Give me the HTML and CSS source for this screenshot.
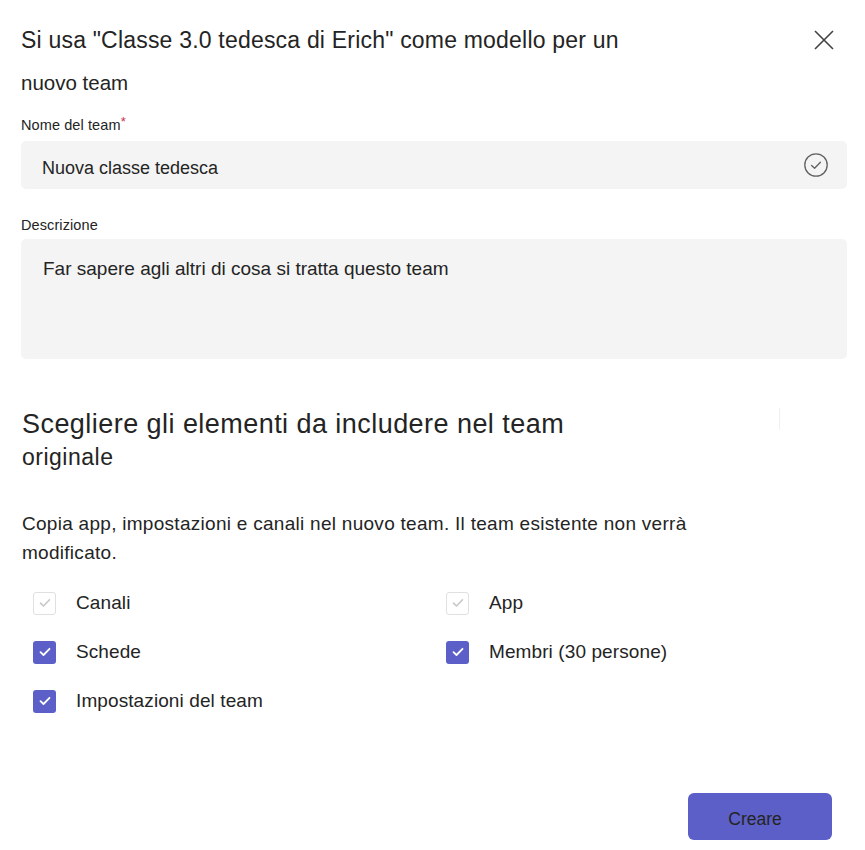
FILE: index.html
```html
<!DOCTYPE html>
<html lang="it">
<head>
    <meta charset="UTF-8">
    <title>Crea team da modello</title>
    <link rel="stylesheet" href="styles.css">
</head>
<body>

<div class="dialog">
    <div class="dialog-header">
        <h1 class="dialog-title">Si usa "Classe 3.0 tedesca di Erich" come modello per un <span class="title-end">nuovo team</span></h1>
        <button class="close-btn" type="button" aria-label="Chiudi">
            <svg width="20" height="20" viewBox="0 0 20 20">
                <path d="M1 1 L19 19 M19 1 L1 19" stroke="#424242" stroke-width="1.6" fill="none"/>
            </svg>
        </button>
    </div>

    <form class="team-form">
        <div class="form-group">
            <label for="teamName">Nome del team<span class="required">*</span></label>
            <div class="input-wrap">
                <input type="text" id="teamName" value="Nuova classe tedesca">
                <svg class="input-icon" width="26" height="26" viewBox="0 0 26 26">
                    <circle cx="13" cy="13" r="11.2" stroke="#616161" stroke-width="1.3" fill="none"/>
                    <path d="M8.6 13.4 L11.6 16.2 L17.4 10.2" stroke="#616161" stroke-width="1.3" fill="none" stroke-linecap="round" stroke-linejoin="round"/>
                </svg>
            </div>
        </div>

        <div class="form-group desc-group">
            <label for="description">Descrizione</label>
            <textarea id="description" placeholder="Far sapere agli altri di cosa si tratta questo team"></textarea>
        </div>

        <div class="section-head">
            <h2 class="section-title">Scegliere gli elementi da includere nel team <span class="sub">originale</span></h2>
            <span class="divider"></span>
        </div>

        <p class="section-text">Copia app, impostazioni e canali nel nuovo team. Il team esistente non verrà modificato.</p>

        <div class="options">
            <label class="option">
                <span class="box disabled">
                    <svg width="12" height="10" viewBox="0 0 12 10"><path d="M1.5 5.2 L4.5 8 L10.5 1.8" stroke="#c7c7c7" stroke-width="1.6" fill="none" stroke-linecap="round" stroke-linejoin="round"/></svg>
                </span>
                Canali
            </label>
            <label class="option">
                <span class="box disabled">
                    <svg width="12" height="10" viewBox="0 0 12 10"><path d="M1.5 5.2 L4.5 8 L10.5 1.8" stroke="#c7c7c7" stroke-width="1.6" fill="none" stroke-linecap="round" stroke-linejoin="round"/></svg>
                </span>
                App
            </label>
            <label class="option">
                <span class="box checked">
                    <svg width="12" height="10" viewBox="0 0 12 10"><path d="M1.5 5.2 L4.5 8 L10.5 1.8" stroke="#ffffff" stroke-width="1.8" fill="none" stroke-linecap="round" stroke-linejoin="round"/></svg>
                </span>
                Schede
            </label>
            <label class="option">
                <span class="box checked">
                    <svg width="12" height="10" viewBox="0 0 12 10"><path d="M1.5 5.2 L4.5 8 L10.5 1.8" stroke="#ffffff" stroke-width="1.8" fill="none" stroke-linecap="round" stroke-linejoin="round"/></svg>
                </span>
                Membri (30 persone)
            </label>
            <label class="option">
                <span class="box checked">
                    <svg width="12" height="10" viewBox="0 0 12 10"><path d="M1.5 5.2 L4.5 8 L10.5 1.8" stroke="#ffffff" stroke-width="1.8" fill="none" stroke-linecap="round" stroke-linejoin="round"/></svg>
                </span>
                Impostazioni del team
            </label>
        </div>

        <div class="actions">
            <button type="submit" class="primary-btn">Creare</button>
        </div>
    </form>
</div>

</body>
</html>
```

FILE: styles.css
```css
body {
    margin: 0;
    font-family: "Liberation Sans", Arial, sans-serif;
    color: #242424;
    background: #ffffff;
}
.dialog {
    padding: 19px 18px 10px 21px;
}
.dialog-header {
    display: flex;
    justify-content: space-between;
    align-items: flex-start;
}
.dialog-title {
    margin: 0;
    width: 640px;
    font-size: 23px;
    font-weight: normal;
    line-height: 42px;
    letter-spacing: 0.2px;
}
.title-end {
    font-size: 20.5px;
    letter-spacing: 0;
}
.close-btn {
    border: none;
    background: none;
    padding: 0;
    margin: 11px 13px 0 0;
    cursor: pointer;
}
.form-group {
    margin-top: 8px;
}
.desc-group {
    margin-top: 26px;
}
label {
    display: block;
    font-size: 14.5px;
    line-height: 20px;
    margin-bottom: 6px;
    letter-spacing: 0.1px;
}
.desc-group label {
    margin-bottom: 4px;
}
.required {
    color: #c4314b;
    vertical-align: 4px;
    font-size: 13px;
}
.input-wrap {
    position: relative;
}
input, textarea {
    box-sizing: border-box;
    width: 826px;
    border: none;
    border-radius: 5px;
    background: #f4f4f4;
    font-family: "Liberation Sans", Arial, sans-serif;
    color: #242424;
    outline: none;
}
input {
    height: 48px;
    padding: 7px 50px 0 21px;
    font-size: 18px;
}
textarea {
    display: block;
    height: 120px;
    padding: 18px 22px;
    font-size: 19px;
    line-height: 24px;
    resize: none;
}
textarea::placeholder {
    color: #242424;
    opacity: 1;
}
.input-icon {
    position: absolute;
    right: 18px;
    top: 11px;
}
.section-head {
    display: flex;
    justify-content: space-between;
    align-items: flex-start;
    margin-top: 49px;
}
.section-title {
    margin: 0 0 0 1px;
    width: 600px;
    font-size: 27px;
    font-weight: normal;
    line-height: 33px;
    letter-spacing: 0.45px;
}
.section-title .sub {
    display: block;
    font-size: 23px;
    letter-spacing: 0.5px;
}
.divider {
    width: 1px;
    height: 22px;
    margin: 0 67px 0 0;
    background: #f0f0f0;
}
.section-text {
    margin: 35px 0 0 1px;
    width: 720px;
    font-size: 19px;
    line-height: 29px;
    letter-spacing: 0.28px;
}
.options {
    display: grid;
    grid-template-columns: 413px 300px;
    row-gap: 25px;
    margin: 24px 0 0 12px;
}
.option {
    display: flex;
    align-items: center;
    gap: 20px;
    margin: 0;
    font-size: 19px;
    line-height: 24px;
    letter-spacing: 0.1px;
    cursor: pointer;
}
.box {
    box-sizing: border-box;
    width: 23px;
    height: 23px;
    border-radius: 3px;
    display: flex;
    align-items: center;
    justify-content: center;
    flex: none;
}
.box.disabled {
    border: 1px solid #e0e0e0;
    background: #ffffff;
}
.box.checked {
    background: #5b5fc7;
}
.actions {
    display: flex;
    justify-content: flex-end;
    margin-top: 80px;
    padding-right: 15px;
}
.primary-btn {
    width: 144px;
    height: 47px;
    padding: 5px 10px 0 0;
    border: none;
    border-radius: 6px;
    background: #5b5fc7;
    color: #242424;
    font-family: "Liberation Sans", Arial, sans-serif;
    font-size: 17.5px;
    cursor: pointer;
}
```
